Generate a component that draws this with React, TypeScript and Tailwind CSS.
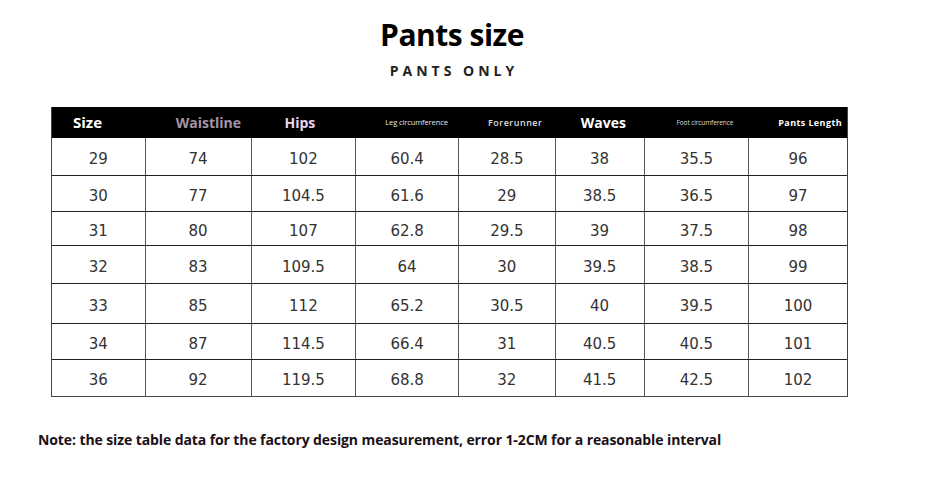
const cols = [93, 106, 105, 103, 97, 89, 105, 99];

const headers = [
  { label: "Size", pl: "pl-[21px]", cls: "text-[15px] font-bold text-white" },
  { label: "Waistline", pl: "pl-[31px]", cls: "text-[14px] font-bold text-[#a394a6]" },
  { label: "Hips", pl: "pl-[34px]", cls: "text-[14px] font-bold text-[#e8d6f2]" },
  { label: "Leg circumference", pl: "pl-[30px]", cls: "text-[7.5px] text-[#e6e6e6] tracking-[-0.1px]" },
  { label: "Forerunner", pl: "pl-[30px]", cls: "text-[9px] font-semibold text-[#dddddd] tracking-[0.5px]" },
  { label: "Waves", pl: "pl-[26px]", cls: "text-[14px] font-bold text-white" },
  { label: "Foot circumference", pl: "pl-[33px]", cls: "text-[6.5px] text-[#dddddd] tracking-[-0.1px]" },
  { label: "Pants Length", pl: "pl-[30px]", cls: "text-[9px] font-bold text-white tracking-[0.4px]" },
];

const rows = [
  { h: "h-[37px]", cells: ["29", "74", "102", "60.4", "28.5", "38", "35.5", "96"] },
  { h: "h-[36px]", cells: ["30", "77", "104.5", "61.6", "29", "38.5", "36.5", "97"] },
  { h: "h-[34px]", cells: ["31", "80", "107", "62.8", "29.5", "39", "37.5", "98"] },
  { h: "h-[38px]", cells: ["32", "83", "109.5", "64", "30", "39.5", "38.5", "99"] },
  { h: "h-[40px]", cells: ["33", "85", "112", "65.2", "30.5", "40", "39.5", "100"] },
  { h: "h-[36px]", cells: ["34", "87", "114.5", "66.4", "31", "40.5", "40.5", "101"] },
  { h: "h-[37px]", cells: ["36", "92", "119.5", "68.8", "32", "41.5", "42.5", "102"] },
];

export default function App() {
  return (
    <div className="w-[932px] h-[504px] bg-white overflow-hidden font-['Open_Sans',sans-serif]">
      <div className="flex flex-col items-center pt-[15px] pr-[28px]">
        <h1 className="text-[30px] leading-[40px] font-bold text-black tracking-[-0.5px]">Pants size</h1>
        <p className="mt-[8px] pl-[4px] text-[14px] leading-[16px] font-bold text-[#222] tracking-[4px]">PANTS ONLY</p>
      </div>

      <div className="ml-[51px] mt-[28px] w-[797px] border border-[#444] border-t-0">
        <div className="flex h-[31px] bg-black">
          {headers.map((hd, i) => (
            <div key={i} style={{ width: cols[i] }} className={`flex items-center ${hd.pl}`}>
              <span className={`whitespace-nowrap ${hd.cls}`}>{hd.label}</span>
            </div>
          ))}
        </div>
        {rows.map((r, ri) => (
          <div key={ri} className={`flex ${r.h} ${ri > 0 ? "border-t border-[#222]" : ""}`}>
            {r.cells.map((c, ci) => (
              <div
                key={ci}
                style={{ width: cols[ci] }}
                className={`flex items-center justify-center pt-[5px] font-['DejaVu_Sans',sans-serif] text-[15px] text-[#333] ${ci > 0 ? "border-l border-[#555]" : ""}`}
              >
                {c}
              </div>
            ))}
          </div>
        ))}
      </div>

      <p className="ml-[38px] mt-[34px] text-[14px] leading-[18px] font-bold text-[#1a1016] tracking-[-0.1px]">
        Note: the size table data for the factory design measurement, error 1-2CM for a reasonable interval
      </p>
    </div>
  );
}
